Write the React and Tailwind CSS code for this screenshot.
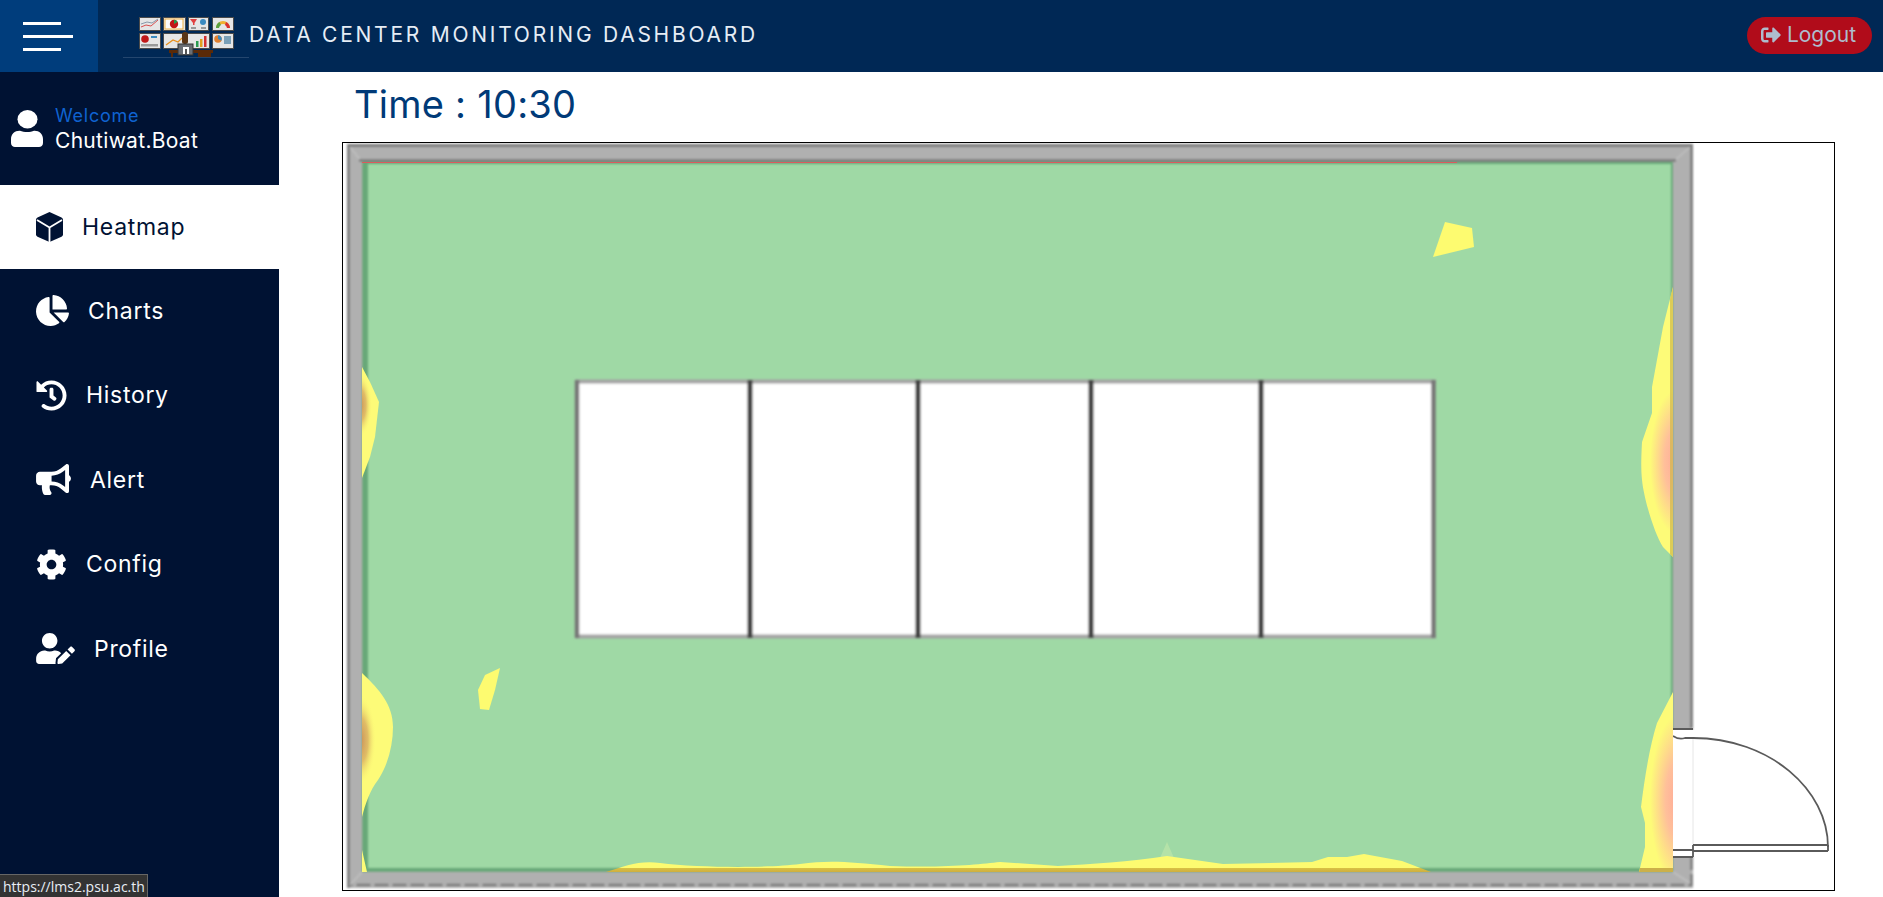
import { FaChartPie, FaHistory, FaBullhorn, FaCog, FaUserEdit, FaSignOutAlt } from 'react-icons/fa';

function CubeIcon({ className }) {
  return (
    <svg viewBox="0 0 27 30" className={className}>
      <path d="M13.5 0L25.5 5.5Q27 6.2 27 8V22.5Q27 24 25.5 24.7L13.5 30L1.5 24.7Q0 24 0 22.5V8Q0 6.2 1.5 5.5Z" fill="currentColor" />
      <path d="M1 8L13.5 15.5L26 8M13.5 15.5V30" fill="none" stroke="#ffffff" strokeWidth="1.8" />
    </svg>
  );
}

function UserIcon({ className }) {
  return (
    <svg viewBox="0 0 32 37" className={className}>
      <ellipse cx="16.5" cy="9.2" rx="10" ry="9.2" fill="currentColor" />
      <path d="M0 33V29C0 24 4 20.5 9 20.8C13 22.5 19.5 22.5 23 20.8C28 20.5 32 24 32 29V33C32 35.5 30 37 28 37H4C2 37 0 35.5 0 33Z" fill="currentColor" />
    </svg>
  );
}

const navItems = [
  { label: 'Heatmap', icon: CubeIcon, iconSize: 'h-[30px] w-[27px]', active: true },
  { label: 'Charts', icon: FaChartPie, iconSize: 'h-[31px] w-[33px]' },
  { label: 'History', icon: FaHistory, iconSize: 'h-[31px] w-[31px]' },
  { label: 'Alert', icon: FaBullhorn, iconSize: 'h-[31px] w-[35px]' },
  { label: 'Config', icon: FaCog, iconSize: 'h-[31px] w-[31px]' },
  { label: 'Profile', icon: FaUserEdit, iconSize: 'h-[31px] w-[39px]' },
];

function LogoPanel({ x, y, w = 21, h = 13, children }) {
  return (
    <g transform={`translate(${x} ${y})`}>
      <rect x="0.5" y="0.5" width={w} height={h} fill="#e6e6e6" stroke="#4a4a4a" strokeWidth="1" />
      {children}
    </g>
  );
}

function Logo() {
  return (
    <svg width="126" height="44" viewBox="0 0 126 44" className="shrink-0">
      <LogoPanel x={16} y={3}>
        <polyline points="2,10 7,8 12,9 19,3" fill="none" stroke="#d85050" strokeWidth="1" />
        <polyline points="2,7 8,5 13,6 19,2" fill="none" stroke="#8899aa" strokeWidth="1" />
      </LogoPanel>
      <LogoPanel x={40} y={3} w={22}>
        <rect x="2" y="2" width="18" height="10" fill="#fafafa" stroke="#f0b040" strokeWidth="1" />
        <circle cx="11" cy="7" r="4.2" fill="#c01818" />
        <path d="M11 7V2.8a4.2 4.2 0 0 1 3.6 2.2z" fill="#2a9a50" />
      </LogoPanel>
      <LogoPanel x={65} y={3} w={20}>
        <path d="M2 2h7l-2.5 4v2H5V6z" fill="#e04040" />
        <circle cx="15" cy="5" r="3" fill="#3a8ac0" />
        <rect x="3" y="10" width="5" height="2" fill="#999" />
        <rect x="13" y="10" width="5" height="2" fill="#999" />
      </LogoPanel>
      <LogoPanel x={89} y={3}>
        <path d="M4 11a7 7 0 0 1 14 0h-3a4 4 0 0 0-8 0z" fill="#f0b030" />
        <path d="M4 11a7 7 0 0 1 3.500-6l1.500 3a4 4 0 0 0-2 3z" fill="#5aa040" />
        <path d="M14 5a7 7 0 0 1 4 6h-3a4 4 0 0 0-2-3z" fill="#d83030" />
      </LogoPanel>
      <LogoPanel x={16} y={19} h={15}>
        <circle cx="6" cy="6" r="3.800" fill="#c01818" />
        <rect x="12" y="3" width="6" height="2" fill="#3a8ac0" />
        <rect x="2" y="11" width="17" height="2.500" fill="#999" />
      </LogoPanel>
      <LogoPanel x={40} y={19} w={46} h={15}>
        <polyline points="3,12 10,7 15,9 19,5" fill="none" stroke="#e8901c" strokeWidth="1.3" />
        <rect x="33" y="8" width="2.500" height="6" fill="#2a9a50" />
        <rect x="37" y="6" width="2.500" height="8" fill="#e0a020" />
        <rect x="41" y="3" width="2.500" height="11" fill="#d03030" />
      </LogoPanel>
      <LogoPanel x={89} y={19} h={15}>
        <circle cx="6" cy="6" r="3.800" fill="#e08030" />
        <path d="M6 6V2.200a3.800 3.800 0 0 1 3.400 5.500z" fill="#3a8ac0" />
        <rect x="12" y="3" width="7" height="8" fill="#7aa0b8" />
      </LogoPanel>
      <rect x="46" y="36" width="44" height="3" fill="#5a2a08" />
      <rect x="75" y="38" width="13" height="5" fill="#5a2a08" />
      <rect x="48" y="39" width="2" height="4" fill="#5a2a08" />
      <rect x="59" y="18" width="6" height="12" rx="2.500" fill="#5a3514" />
      <rect x="55" y="30" width="15" height="11" fill="#6a6e74" stroke="#333" strokeWidth="1" />
      <rect x="60" y="33" width="6" height="7" fill="#ffffff" />
      <rect x="62" y="35" width="2" height="5" fill="#555" />
      <line x1="0" y1="43.500" x2="126" y2="43.500" stroke="#24466e" />
    </svg>
  );
}

// floor plan and heat layer, coordinates are page px so the numbers read off the screenshot
function FloorPlan() {
  return (
    <svg viewBox="343 143 1491 747" className="block h-full w-full">
      <defs>
        <filter id="soft" x="-5%" y="-5%" width="110%" height="110%">
          <feGaussianBlur stdDeviation="1.2" />
        </filter>
        <filter id="edge" x="-5%" y="-5%" width="110%" height="110%">
          <feGaussianBlur stdDeviation="0.6" />
        </filter>
        <radialGradient id="pink">
          <stop offset="0" stopColor="#ffa898" stopOpacity="1" />
          <stop offset="0.45" stopColor="#ffb5a0" stopOpacity="0.85" />
          <stop offset="1" stopColor="#ffb5a0" stopOpacity="0" />
        </radialGradient>
        <radialGradient id="ochre">
          <stop offset="0" stopColor="#c78d58" stopOpacity="1" />
          <stop offset="0.5" stopColor="#d9ad62" stopOpacity="0.8" />
          <stop offset="1" stopColor="#fdfb78" stopOpacity="0" />
        </radialGradient>
        <linearGradient id="heatBottom" x1="0" y1="0" x2="0" y2="1">
          <stop offset="0" stopColor="#fdfb70" />
          <stop offset="0.76" stopColor="#fdfb70" />
          <stop offset="0.8" stopColor="#d8c044" />
          <stop offset="1" stopColor="#cfae40" />
        </linearGradient>
        <clipPath id="rightTop">
          <path d="M1673 287L1663 327L1652 387L1652 413L1642 442C1641 460 1641 470 1642 480C1644 500 1655 535 1663 547L1673 557Z" />
        </clipPath>
        <clipPath id="rightBottom">
          <path d="M1673 692L1657 723C1650 745 1645 775 1641 807L1645 823L1645 847L1639 872H1673Z" />
        </clipPath>
        <clipPath id="leftTop">
          <path d="M362 367L370 382L379 402L375 437L370 457L362 478Z" />
        </clipPath>
        <clipPath id="leftBottom">
          <path d="M362 673C380 690 393 705 393 727C393 745 388 765 378 780C370 790 365 805 362 817V850L367 872H362Z" />
        </clipPath>
      </defs>

      {/* walls */}
      <g filter="url(#soft)">
        <rect x="347" y="144" width="1346" height="744" fill="#b0b0b0" />
        <path d="M348.500 888V145.500H1691.500V728" fill="none" stroke="#7c7c7c" strokeWidth="2.800" />
        <path d="M1691.500 856V885H349" fill="none" stroke="#7c7c7c" strokeWidth="2.600" strokeDasharray="14 4" />
        <path d="M350 147L362 162M1690 147L1673 162M350 885L362 872M1690 883L1673 872" stroke="#c0c0c0" strokeWidth="1.500" fill="none" />
        <rect x="359" y="159" width="1317" height="3" fill="#808080" />
        <rect x="362" y="162" width="1311" height="710" fill="#67a878" />
      </g>
      <g filter="url(#soft)">
        <rect x="368" y="164" width="1303" height="704" fill="#9fd9a5" />
      </g>
      <rect x="362" y="162" width="1095" height="1" fill="#dc5a5e" />

      {/* door opening */}
      <rect x="1673" y="730" width="22" height="127" fill="#ffffff" />
      <line x1="1693" y1="738" x2="1693" y2="845" stroke="#e6e6e6" />
      <g filter="url(#edge)" fill="none" stroke="#5a5a5a" strokeWidth="1.800">
        <path d="M1673 729h20M1673 736q6 4 12 2h8" />
        <path d="M1673 850h20M1673 857h20" />
        <path d="M1693 738C1770 738 1828 790 1828 847" />
        <path d="M1693 845h135M1693 851h135M1828 845v6M1693 845v12" />
      </g>

      {/* server room */}
      <g filter="url(#soft)">
        <rect x="577" y="382" width="858" height="254" fill="#ffffff" />
        <path d="M575 381.500H1436M575 636.500H1436" stroke="#a4a4a4" strokeWidth="4" fill="none" />
        <path d="M577 380V638M1433.500 380V638" stroke="#777" strokeWidth="4.500" fill="none" />
        <path d="M750 380V638M918 380V638M1091 380V638M1261 380V638" stroke="#404040" strokeWidth="5" fill="none" />
      </g>

      {/* heat spots */}
      <g clipPath="url(#rightTop)">
        <rect x="1640" y="285" width="34" height="275" fill="#fdfb78" />
        <ellipse cx="1676" cy="462" rx="26" ry="72" fill="url(#pink)" />
        <rect x="1670" y="285" width="3" height="275" fill="#cdb848" opacity="0.7" />
      </g>
      <g clipPath="url(#rightBottom)">
        <rect x="1638" y="690" width="36" height="184" fill="#fdfb78" />
        <ellipse cx="1678" cy="800" rx="28" ry="85" fill="url(#pink)" />
        <rect x="1638" y="868" width="36" height="4" fill="#cbb04a" />
      </g>
      <g clipPath="url(#leftTop)">
        <rect x="360" y="365" width="22" height="115" fill="#fdfb78" />
        <ellipse cx="360" cy="405" rx="12" ry="32" fill="url(#ochre)" />
      </g>
      <g clipPath="url(#leftBottom)">
        <rect x="360" y="670" width="36" height="204" fill="#fdfb78" />
        <ellipse cx="360" cy="740" rx="16" ry="45" fill="url(#ochre)" />
      </g>
      <g filter="url(#edge)" fill="#fdfb70">
        <path d="M1445 222L1472 228L1474 247L1433 257Z" />
        <path d="M485 675L500 668L495 690L489 710L480 709L478 690Z" />
      </g>
      <path d="M1167 842L1174 858H1160Z" fill="#b4e2a8" />
      <path d="M606 872C625 866 640 860 660 863C700 868 770 868 800 864C830 860 850 862 890 866C950 868 980 864 1000 862L1058 866C1090 864 1130 862 1167 856L1223 864L1312 862L1328 857L1347 857L1364 854L1402 861L1431 872Z" fill="url(#heatBottom)" />
    </svg>
  );
}

export default function App() {
  return (
    <div className="relative flex h-screen flex-col overflow-hidden bg-white font-['Inter',sans-serif]">
      <header className="flex h-[72px] shrink-0 items-center bg-[#002855]">
        <button className="flex h-full w-[98px] shrink-0 flex-col items-start justify-center gap-[10px] bg-[#003d7c] pl-[23px]">
          <span className="h-[3px] w-[38px] bg-white" />
          <span className="h-[3px] w-[50px] bg-white" />
          <span className="h-[3px] w-[38px] bg-white" />
        </button>
        <div className="ml-[25px] flex items-center">
          <Logo />
          <h1 className="mb-[2px] text-[21px] font-normal tracking-[2.750px] text-[#e6edf5]">DATA CENTER MONITORING DASHBOARD</h1>
        </div>
        <button className="mb-[2px] ml-auto mr-[11px] flex h-[37px] w-[125px] items-center justify-center gap-[6px] rounded-full bg-[#b10c1a] pr-[2px] text-[21px] text-[#aebccd]">
          <FaSignOutAlt className="text-[20px]" />
          Logout
        </button>
      </header>

      <div className="flex min-h-0 flex-1">
        <aside className="w-[279px] shrink-0 bg-[#001233]">
          <div className="flex h-[113px] items-center gap-[12px] pl-[11px]">
            <UserIcon className="h-[37px] w-[32px] text-white" />
            <div>
              <p className="text-[18px] leading-[24px] tracking-[0.750px] text-[#0f62d0]">Welcome</p>
              <p className="text-[21px] leading-[26px] tracking-[0.300px] text-white">Chutiwat.Boat</p>
            </div>
          </div>
          <nav className="flex flex-col">
            {navItems.map(({ label, icon: Icon, iconSize, active }) => (
              <a
                key={label}
                className={active
                  ? 'flex h-[83.5px] items-center gap-[19px] bg-white pl-[36px] text-[23px] tracking-[0.700px] text-[#001233]'
                  : 'flex h-[84.5px] items-center gap-[19px] pl-[36px] text-[23px] tracking-[0.700px] text-white'}
              >
                <Icon className={iconSize} />
                {label}
              </a>
            ))}
          </nav>
        </aside>

        <main className="min-w-0 flex-1 pl-[63px]">
          <h2 className="flex h-[70px] items-center pb-[7px] pl-[12px] text-[38px] font-normal leading-none tracking-[0.250px] text-[#003a78]">Time : 10:30</h2>
          <div className="h-[749px] w-[1493px] border border-black bg-white">
            <FloorPlan />
          </div>
        </main>
      </div>

      {/* browser status bubble */}
      <div className="absolute bottom-0 left-0 flex h-[23px] w-[148px] items-center border-r border-t border-[#666] bg-[#333333] pl-[3px] font-['Open_Sans',sans-serif] text-[14px] text-[#e8eef5]">
        https://lms2.psu.ac.th
      </div>
    </div>
  );
}
